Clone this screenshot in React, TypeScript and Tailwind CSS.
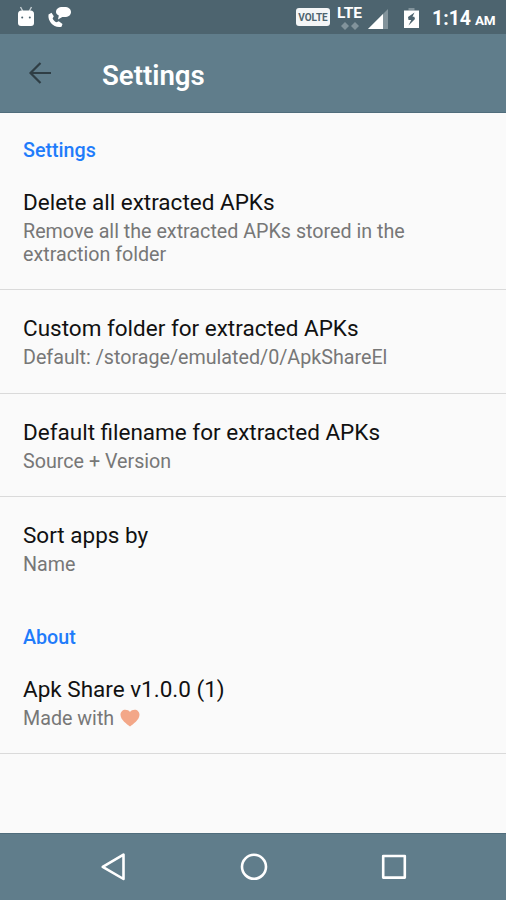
import React from "react";
import { clsx } from "clsx";

type Preference = { title: string; summary: React.ReactNode; divider?: boolean };

const GENERAL: Preference[] = [
  { title: "Delete all extracted APKs", summary: "Remove all the extracted APKs stored in the extraction folder", divider: true },
  { title: "Custom folder for extracted APKs", summary: "Default: /storage/emulated/0/ApkShareEl", divider: true },
  { title: "Default filename for extracted APKs", summary: "Source + Version", divider: true },
  { title: "Sort apps by", summary: "Name" },
];

const ABOUT: Preference[] = [
  { title: "Apk Share v1.0.0 (1)", summary: <>Made with <Heart /></>, divider: true },
];

function Heart() {
  return (
    <svg width="20" height="18" viewBox="0 0 20 18" className="ml-px inline-block align-[-2px]">
      <path d="M10 17.500C7 15.300.5 10.800.5 5.800.5 2.800 2.700.7 5.300.7 7.300.7 9 1.500 10 3 11 1.500 12.700.7 14.700.7c2.600 0 4.800 2.100 4.800 5.100C19.500 10.800 13 15.300 10 17.500z" fill="#f3a788" />
    </svg>
  );
}

function StatusBar() {
  return (
    <div className="flex h-[34px] shrink-0 items-center bg-[#4d646f] text-white">
      <svg width="18" height="21" viewBox="0 0 18 21" className="ml-[17px] -mt-px">
        <path d="M3.500 1l2.200 4M14.500 1l-2.200 4" stroke="#c8d1d5" strokeWidth="1.400" />
        <path d="M1 8q0-3.500 3.500-3.500h9Q17 4.500 17 8v9q0 3-3 3H4q-3 0-3-3z" fill="#fff" />
        <circle cx="5.200" cy="11.500" r="1" fill="#4d646f" />
        <circle cx="12.800" cy="11.500" r="1" fill="#4d646f" />
      </svg>
      <svg width="26" height="24" viewBox="0 0 26 24" className="ml-3">
        <path d="M15.500 2h2c4 0 6.500 2 6.500 5s-2.500 5-6.500 5h-2.200L11 14.500l.8-4C10 9.800 9 8.500 9 7c0-3 2.500-5 6.500-5z" fill="#fff" />
        <path d="M1.500 9.500l3-1.700 2.300 3.400-1.200 2.200c.8 1.700 2.200 3 3.900 3.900l2.300-1 3.700 2.700-1 2.700C7.500 23.500.5 17 1.500 9.500z" fill="#fff" />
      </svg>
      <div className="ml-auto mr-[7px] flex h-[18px] w-[34px] items-center justify-center rounded-[3px] bg-[#f4f6f7] text-[10px] font-bold text-[#4d646f]">
        VOLTE
      </div>
      <div className="flex h-[27px] w-[25px] flex-col items-center">
        <span className="text-[15.5px] leading-[19px] font-bold">LTE</span>
        <svg width="18" height="8" viewBox="0 0 18 8" className="-mt-px shrink-0" fill="#82939b">
          <path d="M4 0l4 4-4 4-4-4zM14 0l4 4-4 4-4-4z" />
        </svg>
      </div>
      <svg width="21" height="20" viewBox="0 0 21 20" className="mt-[3px] ml-[5px]">
        <path d="M21 0v20H1z" fill="#82939b" />
        <path d="M16 5v15H1z" fill="#fff" />
      </svg>
      <svg width="15" height="20" viewBox="0 0 15 20" className="mt-px ml-4">
        <path d="M4.500 0h6v2.500h-6z" fill="#82939b" />
        <path d="M0 2.500h15V20H0z" fill="#fff" />
        <path d="M10.500 4.500L4 9l.5 3h2.700L4.500 17.500l6.500-6.500-.7-2.200H8.500z" fill="#4d646f" />
      </svg>
      <div className="mt-[3px] ml-[13px] mr-[10px] flex w-[64px] items-baseline gap-1 whitespace-nowrap leading-none font-bold">
        <span className="text-[19.5px]">1:14</span>
        <span className="text-[13.5px] tracking-[-0.5px]">AM</span>
      </div>
    </div>
  );
}

function Toolbar() {
  return (
    <header className="flex h-[79px] shrink-0 items-center border-b border-[#506d7c] bg-[#607d8b]">
      <button className="ml-[28px] w-[74px]" aria-label="Back">
        <svg width="24" height="24" viewBox="0 0 24 24" fill="none" stroke="#2f3e45" strokeWidth="2.200">
          <path d="M23 12H2.500M12.500 2L2.500 12l10 10" />
        </svg>
      </button>
      <h1 className="mt-[6px] text-[27.6px] font-semibold text-white">Settings</h1>
    </header>
  );
}

function Category({ label, first }: { label: string; first?: boolean }) {
  return (
    <h2 className={clsx("px-[23px] text-[19.7px] leading-[24px] font-medium text-[#1f7cfb]", first ? "pt-[26px]" : "pt-[50px]")}>
      {label}
    </h2>
  );
}

function PreferenceRow({ title, summary, divider, first }: Preference & { first?: boolean }) {
  return (
    <div className={clsx("px-[23px]", first ? "pt-[26px]" : "pt-[25px]", divider && "border-b border-[#dadada] pb-[23.3px]")}>
      <div className="text-[22.5px] leading-[26px] text-[#111]">{title}</div>
      <div className="mt-[5px] max-w-[420px] text-[19.7px] leading-[23px] text-[#777]">{summary}</div>
    </div>
  );
}

function NavBar() {
  return (
    <nav className="flex h-[67px] shrink-0 items-center justify-between border-t border-[#506d7c] bg-[#607d8b] pl-[100px] pr-[99px]">
      <svg width="26" height="30" viewBox="0 0 26 30" fill="none" stroke="#fff" strokeWidth="2.600" strokeLinejoin="round">
        <path d="M23.500 2.700v24.300L2.700 14.800z" />
      </svg>
      <svg width="28" height="28" viewBox="0 0 28 28" fill="none" stroke="#fff" strokeWidth="2.600">
        <circle cx="14" cy="13.800" r="12" />
      </svg>
      <svg width="26" height="26" viewBox="0 0 26 26" fill="none" stroke="#fff" strokeWidth="2.600" strokeLinejoin="round">
        <path d="M2.200 2h21.600v21.600H2.200z" />
      </svg>
    </nav>
  );
}

export default function App() {
  return (
    <div className="flex h-[900px] w-[506px] flex-col overflow-hidden bg-[#fafafa] font-['Roboto',sans-serif]">
      <StatusBar />
      <Toolbar />
      <main className="min-h-0 flex-1">
        <Category label="Settings" first />
        {GENERAL.map((pref, i) => (
          <PreferenceRow key={pref.title} {...pref} first={i === 0} />
        ))}
        <Category label="About" />
        {ABOUT.map((pref) => (
          <PreferenceRow key={pref.title} {...pref} first />
        ))}
      </main>
      <NavBar />
    </div>
  );
}
